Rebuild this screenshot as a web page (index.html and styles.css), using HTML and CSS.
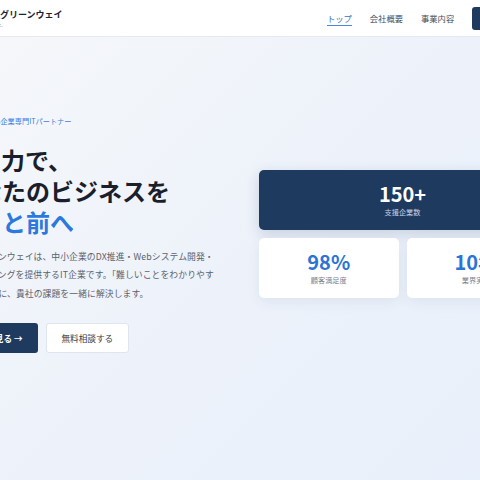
FILE: index.html
```html
<!DOCTYPE html>
<html lang="ja">
<head>
<meta charset="utf-8">
<title>株式会社グリーンウェイ</title>
<link rel="stylesheet" href="styles.css">
</head>
<body>
<div class="site">

  <header class="site-header">
    <div class="header-inner">
      <a class="logo" href="#">
        <span class="logo-name">株式会社グリーンウェイ</span>
        <span class="logo-sub">GREENWAY Inc.</span>
      </a>
      <nav class="global-nav">
        <a class="is-active" href="#">トップ</a>
        <a href="#">会社概要</a>
        <a href="#">事業内容</a>
        <a class="nav-contact" href="#">お問い合わせ</a>
      </nav>
    </div>
  </header>

  <section class="hero">
    <div class="hero-inner">
      <div class="hero-text">
        <p class="hero-badge">中小企業専門ITパートナー</p>
        <h1 class="hero-title">ITの力で、<br>あなたのビジネスを<br><span class="accent">もっと前へ</span></h1>
        <p class="hero-lead">弊社グリーンウェイは、中小企業のDX推進・Webシステム開発・<br>ブランディングを提供するIT企業です。「難しいことをわかりやす<br>く」を信条に、貴社の課題を一緒に解決します。</p>
        <div class="hero-actions">
          <a class="btn btn-primary" href="#">事例を見る →</a>
          <a class="btn btn-secondary" href="#">無料相談する</a>
        </div>
      </div>

      <div class="hero-stats">
        <div class="stat stat-main">
          <span class="stat-num">150+</span>
          <span class="stat-label">支援企業数</span>
        </div>
        <div class="stat">
          <span class="stat-num">98%</span>
          <span class="stat-label">顧客満足度</span>
        </div>
        <div class="stat">
          <span class="stat-num">10年</span>
          <span class="stat-label">業界実績</span>
        </div>
      </div>
    </div>
  </section>

</div>
</body>
</html>
```

FILE: styles.css
```css
html, body {
  margin: 0;
  padding: 0;
  overflow: hidden;
}
body {
  font-family: "Noto Sans CJK JP", "Noto Sans", sans-serif;
  color: #1c2230;
  background: #eef3fb;
}
a {
  text-decoration: none;
  color: inherit;
}
.site {
  width: 500px;
}

/* header */
.site-header {
  display: flex;
  justify-content: center;
  background: #fff;
  border-bottom: 1px solid #e6eaf0;
}
.header-inner {
  flex: 0 0 592px;
  box-sizing: border-box;
  height: 36px;
  padding-left: 10px;
  display: flex;
  align-items: center;
  justify-content: space-between;
}
.logo {
  display: flex;
  flex-direction: column;
}
.logo-name {
  font-size: 9px;
  line-height: 12px;
  font-weight: 700;
  color: #1c2230;
}
.logo-sub {
  font-size: 5px;
  line-height: 7px;
  color: #8a919c;
  letter-spacing: 0.05em;
}
.global-nav {
  display: flex;
  align-items: center;
  gap: 18px;
}
.global-nav a {
  font-size: 8.3px;
  line-height: 12px;
  color: #444b57;
  padding: 2px 0 1px;
  border-bottom: 1.5px solid transparent;
}
.global-nav a.is-active {
  color: #3a6fc0;
  border-bottom-color: #4a86e0;
}
.global-nav a.nav-contact {
  background: #1e3a5f;
  color: #fff;
  padding: 0 12px;
  line-height: 23px;
  border: 0;
  border-radius: 3px;
}

/* hero */
.hero {
  display: flex;
  justify-content: center;
  align-items: flex-start;
  min-height: 443px;
  padding-top: 78px;
  box-sizing: border-box;
  background: linear-gradient(135deg, #f5f7fa 0%, #edf2fa 50%, #e8f0fb 100%);
}
.hero-inner {
  flex: 0 0 592px;
  display: grid;
  grid-template-columns: 266px 287px;
  gap: 39px;
  align-items: center;
}
.hero-badge {
  display: flex;
  align-items: center;
  gap: 8px;
  margin: 0 0 16.5px;
  font-size: 7.2px;
  line-height: 12px;
  color: #3b7fe0;
}
.hero-badge::before {
  content: "";
  width: 24px;
  height: 1px;
  background: #3b7fe0;
}
.hero-title {
  margin: 0 0 11px;
  font-size: 24px;
  line-height: 31px;
  font-weight: 700;
  color: #1a1f2b;
  white-space: nowrap;
}
.hero-title .accent {
  color: #2b78de;
}
.hero-lead {
  margin: 0 0 20px;
  font-size: 8.8px;
  line-height: 18.5px;
  letter-spacing: 0.01em;
  color: #5b626e;
  white-space: nowrap;
}
.hero-actions {
  display: flex;
  gap: 8px;
}
.btn {
  display: flex;
  align-items: center;
  justify-content: center;
  box-sizing: border-box;
  height: 30px;
  padding: 0 15px;
  font-size: 8.6px;
  border-radius: 3px;
}
.btn-primary {
  background: #1e3a5f;
  color: #fff;
  font-weight: 700;
}
.btn-secondary {
  background: #fff;
  color: #333a45;
  border: 1px solid #dfe5ee;
}

/* stats */
.hero-stats {
  display: grid;
  grid-template-columns: 1fr 1fr;
  gap: 8px;
}
.stat {
  height: 60px;
  box-sizing: border-box;
  display: flex;
  flex-direction: column;
  align-items: center;
  justify-content: center;
  gap: 2px;
  background: #fff;
  border-radius: 5px;
  box-shadow: 0 4px 14px rgba(30, 58, 95, 0.07);
}
.stat-main {
  grid-column: span 2;
  background: #1e3a5f;
  box-shadow: 0 4px 14px rgba(30, 58, 95, 0.18);
}
.stat-num {
  font-size: 20px;
  line-height: 22px;
  font-weight: 700;
  color: #2b74d6;
}
.stat-label {
  font-size: 7.2px;
  line-height: 11px;
  color: #7a818c;
}
.stat-main .stat-num {
  color: #fff;
}
.stat-main .stat-label {
  color: #c5d1e2;
}
```
